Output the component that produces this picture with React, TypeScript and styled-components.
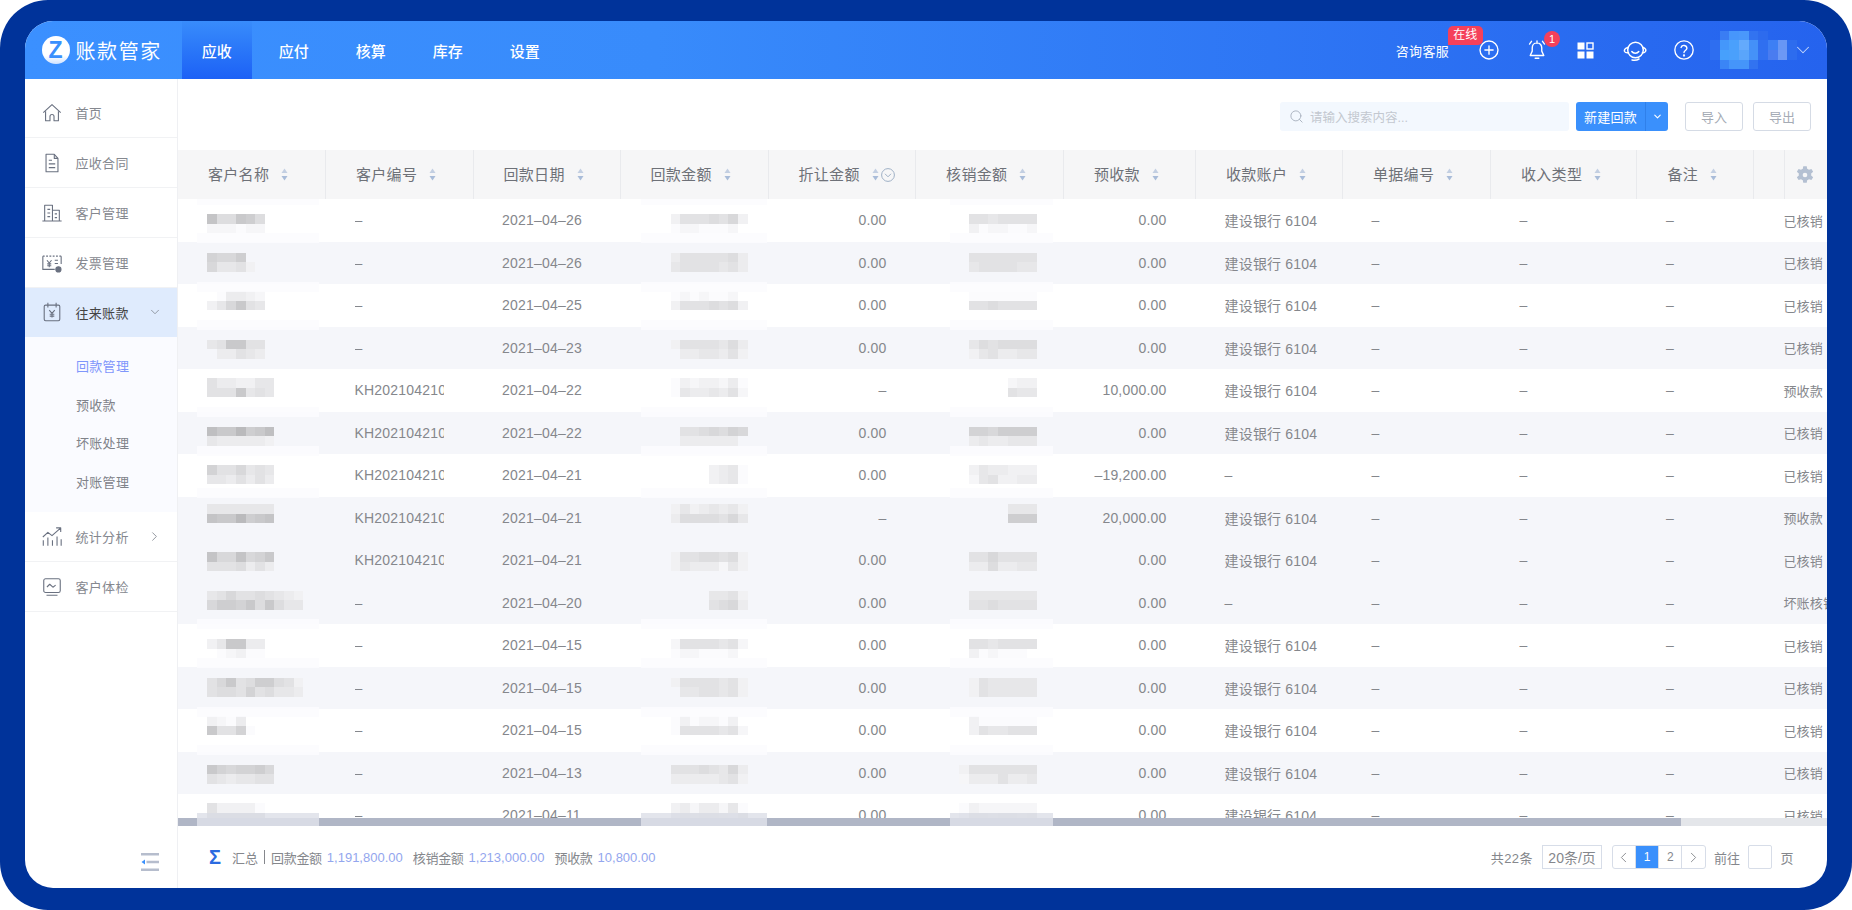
import styled, { createGlobalStyle } from "styled-components"
import { ChevronDown, ChevronLeft, ChevronRight, Search } from "lucide-react"

const GlobalStyle = createGlobalStyle`
  html, body {
    margin: 0;
    padding: 0;
    background: #fff;
  }
  body {
    font-family: "Liberation Sans", "Noto Sans CJK SC", sans-serif;
  }
  * {
    box-sizing: border-box;
  }
`

const TABS = ["应收", "应付", "核算", "库存", "设置"]

const COLUMNS = [
  { title: "客户名称" },
  { title: "客户编号" },
  { title: "回款日期" },
  { title: "回款金额" },
  { title: "折让金额", extra: true },
  { title: "核销金额" },
  { title: "预收款" },
  { title: "收款账户" },
  { title: "单据编号" },
  { title: "收入类型" },
  { title: "备注" },
]

const ROWS = [
  { top: 15, code: "–", date: "2021–04–26", off: "0.00", pre: "0.00", acc: true, status: "已核销", name: ["499569", "eeefee"], amt: ["daaa9a8d", "feefffe."], done: [".aabaaaa", ".dfeeffe"] },
  { top: 11, gray: true, code: "–", date: "2021–04–26", off: "0.00", pre: "0.00", acc: true, status: "已核销", name: ["7886", "8bbad"], amt: ["caaaaa9c", "baaaabac"], done: [".aaaaaaa", ".baaaabb"] },
  { top: 7, code: "–", date: "2021–04–25", off: "0.00", pre: "0.00", acc: true, status: "已核销", name: [".fccde", "db85ab"], amt: ["fefeffe.", "daaa9a9d"], done: [".fffffff", ".aa9aaaa"] },
  { top: 13, gray: true, code: "–", date: "2021–04–23", off: "0.00", pre: "0.00", acc: true, status: "已核销", name: ["ba55aa", ".ccabc"], amt: ["daaaab9c", ".ccbbcad"], done: [".b9a9999", ".dbaccbb"] },
  { top: 9, code: "KH2021042100", date: "2021–04–22", off: "–", pre: "10,000.00", acc: true, status: "预收款", name: ["accddbb", "aaa5bab"], amt: ["fdeddecf", "fbccbcae"], done: [".....edd", ".....abb"] },
  { top: 15, gray: true, code: "KH2021042100", date: "2021–04–22", off: "0.00", pre: "0.00", acc: true, status: "已核销", name: ["3552653", "bcccccd"], amt: [".aa98978", ".cccccc."], done: [".7786666", ".cbccbbb"] },
  { top: 11, code: "KH2021042100", date: "2021–04–21", off: "0.00", pre: "–19,200.00", acc: false, status: "已核销", name: ["7aa8bab", "bbcacac"], amt: ["....dcbf", "....dcbf"], done: [".dbccddd", ".ebaddcc"] },
  { top: 7.5, gray: true, code: "KH2021042100", date: "2021–04–21", off: "–", pre: "20,000.00", acc: true, status: "预收款", name: ["bbbbbbb", "4552654"], amt: ["dbdcbcbd", "c9999a8b"], done: [".....bbb", ".....666"] },
  { top: 13, gray: true, code: "KH2021042100", date: "2021–04–21", off: "0.00", pre: "0.00", acc: true, status: "已核销", name: ["4884875", "aaa9cac"], amt: ["daa99a9d", "dbcccebd"], done: [".aa8aaaa", ".cc9ccbb"] },
  { top: 9, gray: true, code: "–", date: "2021–04–20", off: "0.00", pre: "0.00", acc: false, status: "坏账核销", name: ["ba8aa9abcd", "86675959bb"], amt: ["....bbad", "....a98c"], done: [".bbbbbbb", ".aa9aaaa"] },
  { top: 15, code: "–", date: "2021–04–15", off: "0.00", pre: "0.00", acc: true, status: "已核销", name: ["db55cc", ".fedff"], amt: ["eaaaabae", "feefffe."], done: [".aabaaaa", ".dfefff"] },
  { top: 11, gray: true, code: "–", date: "2021–04–15", off: "0.00", pre: "0.00", acc: true, status: "已核销", name: ["a85a9669ad", "a99a7a9bbc"], amt: ["daaaabad", ".bbaabad"], done: [".dabbbbb", ".dabbbbb"] },
  { top: 7, code: "–", date: "2021–04–15", off: "0.00", pre: "0.00", acc: true, status: "已核销", name: ["defc", "5aa7f"], amt: ["fdfeefd.", "faaaabae"], done: [".dffffff", ".dabbaaa"] },
  { top: 13, gray: true, code: "–", date: "2021–04–13", off: "0.00", pre: "0.00", acc: true, status: "已核销", name: ["5787768", "abcbbaa"], amt: ["aaa9ab8c", "cccccbad"], done: ["daaaaaaa", "ecccaccb"] },
  { top: 9, code: "–", date: "2021–04–11", off: "0.00", pre: "0.00", acc: true, status: "已核销", name: ["addddf", "555555"], amt: ["dceccebf", "86766785"], done: ["fdeeeeee", "c6676676"] },
]

const SMUDGE_TOPS = [-4, 34, 83, 121, 208, 247, 289, 420, 459, 508, 546]

const AVATAR = [
  ["", "#3a7df3", "#4796fb", "#4a98fb", "#3273f0", "#2d6bee", "", "", ""],
  ["#2e6ef0", "#4497fb", "#4aa0fc", "#64aafc", "#4490f8", "#2f6ff0", "#3d7ff4", "#6796f5", "#2d6cee"],
  ["#2e6ef0", "#47a0fc", "#4aa0fc", "#5aa5fb", "#4592f8", "#3270f0", "#4a7cf0", "#6c98f5", "#2d6cee"],
  ["", "#3a85f6", "#4595fa", "#4595fa", "#3273f0", "", "", "", ""],
]

const shade = (ch: string) => {
  const h = parseInt(ch, 16)
  if (Number.isNaN(h)) return "transparent"
  const g = 0xb0 + h * 5
  return `rgb(${g},${g},${Math.min(g + 2, 255)})`
}

const SortIcon = () => (
  <svg width="7" height="13" viewBox="0 0 7 13">
    <path d="M3.5 0.5 6.5 5H0.5z" fill="#c3cfe2" />
    <path d="M3.5 12.5 0.5 8h6z" fill="#a9bcd9" />
  </svg>
)

const Mosaic = ({ rows, top, left }: { rows: string[]; top: number; left: number }) => (
  <MosaicBox $top={top} $left={left}>
    {rows.map((line, i) => (
      <TileRow key={i}>
        {line.split("").map((ch, j) => (
          <Tile key={j} $color={shade(ch)} />
        ))}
      </TileRow>
    ))}
  </MosaicBox>
)

const IconHome = () => (
  <NavSvg viewBox="0 0 24 24">
    <path d="M2.5 11.5 12 2.8l9.5 8.7" />
    <path d="M5 10v10.5h4.8v-4.6a2.2 2.2 0 0 1 4.4 0v4.6H19V10" />
  </NavSvg>
)

const IconDoc = () => (
  <NavSvg viewBox="0 0 24 24">
    <path d="M5.5 2.5h9l4 4.5v14.5h-13z" />
    <path d="M14.5 2.5V7h4M8.5 9h3.5M8.5 13h7M8.5 17h7" />
  </NavSvg>
)

const IconBuilding = () => (
  <NavSvg viewBox="0 0 24 24">
    <path d="M4 20.5V3.5h8.5v17M12.5 9H20v11.5M1.5 20.8h21" />
    <path d="M7 8h3M7 12h3M7 16h3M15 13h2.5M15 17h2.5" />
  </NavSvg>
)

const IconInvoice = () => (
  <NavSvg viewBox="0 0 24 24">
    <path d="M2 4.5v14.5h13M22 13V4.5" />
    <path d="M2 4.5h20" strokeDasharray="2 1.6" />
    <path d="M6.5 9 9 12l2.5-3M9 12v4.5M6.8 13h4.4M6.8 15h4.4M15 9h3.5M15 12.5h3.5" />
    <circle cx="19" cy="19" r="2.8" fill="#6a7180" />
  </NavSvg>
)

const IconCalendar = () => (
  <NavSvg viewBox="0 0 24 24">
    <rect x="3.5" y="4.5" width="17" height="17" rx="1.5" />
    <path d="M7.5 2v5M16.5 2v5" />
    <path d="M9 10l3 3.5 3-3.5M12 13.5V18M9.5 14.5h5M9.5 16.5h5" />
  </NavSvg>
)

const IconChart = () => (
  <NavSvg viewBox="0 0 24 24">
    <path d="M2.5 21.5v-6M7.5 21.5v-9M12.5 21.5v-6M17.5 21.5v-10M22 21.5v-7" />
    <path d="M2 12 7.5 7l4.5 3.5 9-8M16.5 2H21.5v4.5" />
  </NavSvg>
)

const IconMonitor = () => (
  <NavSvg viewBox="0 0 24 24">
    <rect x="3" y="3" width="18" height="15" rx="2" />
    <path d="M6.5 12l3-3 3.5 3.2L16 10M6 21h12" />
  </NavSvg>
)

const IconPlus = () => (
  <TopSvg viewBox="0 0 24 24">
    <circle cx="12" cy="12" r="9.8" />
    <path d="M12 7.5v9M7.5 12h9" />
  </TopSvg>
)

const IconBell = () => (
  <TopSvg viewBox="0 0 24 24">
    <path d="M12 4.2c-3.6 0-5.2 2.9-5.2 5.6v3.4L4.6 18h14.8l-2.2-4.8V9.8c0-2.7-1.6-5.6-5.2-5.6z" />
    <path d="M10 21h4M12 2v2M6 2.5 3.8 5.5M18 2.5l2.2 3" />
  </TopSvg>
)

const IconApps = () => (
  <svg width="17" height="17" viewBox="0 0 17 17">
    <rect x="0.5" y="0.5" width="7" height="7" fill="#fff" />
    <rect x="10" y="1" width="6" height="6" fill="none" stroke="#fff" strokeWidth="1.4" />
    <rect x="0.5" y="9.5" width="7" height="7" fill="#fff" />
    <rect x="9.5" y="9.5" width="7" height="7" fill="#fff" />
  </svg>
)

const IconService = () => (
  <TopSvg viewBox="0 0 24 24" $size={24}>
    <circle cx="12.5" cy="12" r="7.8" />
    <path d="M5 9.5C2 10 1 12 1.6 13.5c.6 1.2 2.4 1.4 3.9 1.2M20 9.5c2.4.6 3.4 2.4 2.4 4-.6 1.1-1.8 1.4-3 1.2" />
    <path d="M8.8 13.5c1.6 2.4 5.4 2.4 7 0M9 22c2.4.6 5 .3 7-1" />
  </TopSvg>
)

const IconHelp = () => (
  <TopSvg viewBox="0 0 24 24">
    <circle cx="12" cy="12" r="10" />
    <path d="M8.8 9.2a3.3 3.3 0 0 1 6.4 1c0 2.2-3.2 2.6-3.2 4.6" />
    <circle cx="12" cy="18" r="0.5" />
  </TopSvg>
)

const IconCollapse = () => (
  <svg width="19" height="18" viewBox="0 0 19 18">
    <path d="M0 1.3h18M5.5 9H18M0 16.7h18" stroke="#b6bdcd" strokeWidth="2.4" fill="none" />
    <path d="M0.5 9 4 6.6v4.8z" fill="#3a90fc" />
  </svg>
)

const IconRound = () => (
  <svg width="14" height="14" viewBox="0 0 14 14">
    <circle cx="7" cy="7" r="6.4" fill="none" stroke="#9fb0c6" strokeWidth="1" />
    <path d="M4 5.8 7 8.8l3-3" fill="none" stroke="#9fb0c6" strokeWidth="1" />
  </svg>
)

export default function App() {
  return (
    <>
      <GlobalStyle />
      <Device>
        <Screen>
          <TopBar>
            <Brand>
              <LogoMark>Z</LogoMark>
              <BrandName>账款管家</BrandName>
            </Brand>
            <Tabs>
              {TABS.map((tab, i) => (
                <Tab key={tab} $active={i === 0}>
                  {tab}
                </Tab>
              ))}
            </Tabs>
            <TopRight>
              <Consult>
                咨询客服
                <OnlineBadge>在线</OnlineBadge>
              </Consult>
              <IconSlot $width={24}>
                <IconPlus />
              </IconSlot>
              <IconSlot $width={24} $gap={24}>
                <IconBell />
                <CountBadge>1</CountBadge>
              </IconSlot>
              <IconSlot $width={24} $gap={24}>
                <IconApps />
              </IconSlot>
              <IconSlot $width={24} $gap={26}>
                <IconService />
              </IconSlot>
              <IconSlot $width={24} $gap={25}>
                <IconHelp />
              </IconSlot>
              <AvatarGrid>
                {AVATAR.map((line, i) => (
                  <AvatarRow key={i}>
                    {line.map((c, j) => (
                      <AvatarTile key={j} $color={c || "transparent"} />
                    ))}
                  </AvatarRow>
                ))}
              </AvatarGrid>
              <ChevronDown size={22} color="#c6d8fb" strokeWidth={1.1} />
            </TopRight>
          </TopBar>
          <Body>
            <Sidebar>
              <NavItem>
                <IconHome />
                首页
              </NavItem>
              <NavItem>
                <IconDoc />
                应收合同
              </NavItem>
              <NavItem>
                <IconBuilding />
                客户管理
              </NavItem>
              <NavItem>
                <IconInvoice />
                发票管理
              </NavItem>
              <NavItem $active>
                <IconCalendar />
                往来账款
                <NavArrow>
                  <ChevronDown size={14} strokeWidth={1.3} />
                </NavArrow>
              </NavItem>
              <SubMenu>
                <SubItem $active>回款管理</SubItem>
                <SubItem>预收款</SubItem>
                <SubItem>坏账处理</SubItem>
                <SubItem>对账管理</SubItem>
              </SubMenu>
              <NavItem>
                <IconChart />
                统计分析
                <NavArrow>
                  <ChevronRight size={15} strokeWidth={1.3} />
                </NavArrow>
              </NavItem>
              <NavItem>
                <IconMonitor />
                客户体检
              </NavItem>
              <CollapseRow>
                <IconCollapse />
              </CollapseRow>
            </Sidebar>
            <Main>
              <Toolbar>
                <SearchBox>
                  <Search size={15} color="#aab2bf" strokeWidth={1.5} />
                  请输入搜索内容...
                </SearchBox>
                <SplitButton>
                  <SplitLabel>新建回款</SplitLabel>
                  <SplitArrow>
                    <ChevronDown size={11} strokeWidth={2.4} />
                  </SplitArrow>
                </SplitButton>
                <GhostButton>导入</GhostButton>
                <GhostButton>导出</GhostButton>
              </Toolbar>
              <TableArea>
                <HeaderRow>
                  {COLUMNS.map((col) => (
                    <HeaderCell key={col.title}>
                      <HeaderTitle>{col.title}</HeaderTitle>
                      <SortSlot $tight={col.extra}>
                        <SortIcon />
                      </SortSlot>
                      {col.extra && <IconRound />}
                    </HeaderCell>
                  ))}
                  <HeaderCell />
                  <GearCell>
                    <svg width="20" height="20" viewBox="0 0 24 24" fill="#b4c0d2">
                      <path d="M14.1 1.5l.5 3a8 8 0 0 1 2.2 1.3l2.9-1 2.1 3.3-2.4 2a8 8 0 0 1 0 2.6l2.4 2-2.1 3.3-2.9-1a8 8 0 0 1-2.2 1.3l-.5 3H9.9l-.5-3a8 8 0 0 1-2.2-1.3l-2.9 1-2.1-3.3 2.4-2a8 8 0 0 1 0-2.6l-2.4-2 2.1-3.3 2.9 1a8 8 0 0 1 2.2-1.3l.5-3zM12 9.2a2.8 2.8 0 1 0 0 5.6 2.8 2.8 0 0 0 0-5.6z" fillRule="evenodd" />
                    </svg>
                  </GearCell>
                </HeaderRow>
                <TableBody>
                  {ROWS.map((row, i) => (
                    <Row key={i} $gray={row.gray}>
                      <Cell>
                        <Mosaic rows={row.name} top={row.top} left={29} />
                      </Cell>
                      <Cell>
                        <CodeText>{row.code}</CodeText>
                      </Cell>
                      <Cell>{row.date}</Cell>
                      <Cell>
                        <Mosaic rows={row.amt} top={row.top} left={50} />
                      </Cell>
                      <Cell $right>{row.off}</Cell>
                      <Cell>
                        <Mosaic rows={row.done} top={row.top} left={43.4} />
                      </Cell>
                      <Cell $right>{row.pre}</Cell>
                      <Cell>{row.acc ? "建设银行 6104" : "–"}</Cell>
                      <Cell>–</Cell>
                      <Cell>–</Cell>
                      <Cell>–</Cell>
                      <StatusCell>{row.status}</StatusCell>
                    </Row>
                  ))}
                  {SMUDGE_TOPS.map((top) => (
                    <div key={top}>
                      <Smudge $top={top} $left={18.7} $width={122} />
                      <Smudge $top={top} $left={463} $width={126} />
                      <Smudge $top={top} $left={772} $width={103} />
                    </div>
                  ))}
                </TableBody>
                <ScrollTrack>
                  <ScrollThumb />
                </ScrollTrack>
                <RedactPatch $left={18.7} $width={122} $height={15} />
                <RedactPatch $left={463} $width={126} $height={19} />
                <RedactPatch $left={772} $width={103} $height={19} />
              </TableArea>
              <Footer>
                <Summary>
                  <SigmaMark>Σ</SigmaMark>
                  <SummaryHead>汇总</SummaryHead>
                  <SummaryBar />
                  <SummaryLabel>回款金额</SummaryLabel>
                  <SummaryValue>1,191,800.00</SummaryValue>
                  <SummaryLabel>核销金额</SummaryLabel>
                  <SummaryValue>1,213,000.00</SummaryValue>
                  <SummaryLabel>预收款</SummaryLabel>
                  <SummaryValue>10,800.00</SummaryValue>
                </Summary>
                <Pager>
                  <PagerCount>共22条</PagerCount>
                  <PageSize>20条/页</PageSize>
                  <PageGroup>
                    <PageCell>
                      <ChevronLeft size={17} strokeWidth={1.3} />
                    </PageCell>
                    <PageCell $active>1</PageCell>
                    <PageCell>2</PageCell>
                    <PageCell>
                      <ChevronRight size={17} strokeWidth={1.3} />
                    </PageCell>
                  </PageGroup>
                  <PagerText>前往</PagerText>
                  <GotoInput />
                  <PagerText>页</PagerText>
                </Pager>
              </Footer>
            </Main>
          </Body>
        </Screen>
      </Device>
    </>
  )
}

const Device = styled.div`
  width: 1852px;
  height: 910px;
  padding: 21px 25px 22px 24.5px;
  background: #00339a;
  border-radius: 48px;
  overflow: hidden;
`

const Screen = styled.div`
  width: 100%;
  height: 100%;
  display: flex;
  flex-direction: column;
  background: #fff;
  border-radius: 28px;
  overflow: hidden;
`

const TopBar = styled.header`
  height: 58px;
  flex: none;
  display: flex;
  align-items: stretch;
  color: #fff;
  background: linear-gradient(90deg, #3b90ff 0%, #388bfb 35%, #2563ee 100%);
`

const Brand = styled.div`
  width: 157.5px;
  display: flex;
  align-items: center;
  padding-left: 17px;
  gap: 6px;
`

const LogoMark = styled.div`
  width: 28px;
  height: 28px;
  border-radius: 50%;
  display: flex;
  align-items: center;
  justify-content: center;
  background: linear-gradient(180deg, #fff 70%, #cfe2ff 100%);
  color: #3a8ffd;
  font-size: 23px;
  font-weight: 700;
  line-height: 1;
`

const BrandName = styled.div`
  font-size: 20px;
  letter-spacing: 1.6px;
  white-space: nowrap;
`

const Tabs = styled.nav`
  display: flex;
  gap: 7.5px;
`

const Tab = styled.div<{ $active?: boolean }>`
  width: 69.5px;
  display: flex;
  align-items: center;
  justify-content: center;
  font-size: 15px;
  font-weight: 500;
  background: ${({ $active }) =>
    $active ? "linear-gradient(180deg, #388cfb 0%, #1c61f6 100%)" : "transparent"};
`

const TopRight = styled.div`
  margin-left: auto;
  display: flex;
  align-items: center;
  padding-right: 13px;
`

const Consult = styled.div`
  position: relative;
  font-size: 13px;
  letter-spacing: 0.3px;
  margin-right: 28px;
  white-space: nowrap;
`

const OnlineBadge = styled.span`
  position: absolute;
  left: 52px;
  top: -15px;
  width: 35px;
  height: 19px;
  border-radius: 5px 5px 5px 0;
  background: #f5405a;
  font-size: 12px;
  line-height: 19px;
  text-align: center;
  letter-spacing: 0;
`

const IconSlot = styled.div<{ $width: number; $gap?: number }>`
  position: relative;
  width: ${({ $width }) => $width}px;
  display: flex;
  align-items: center;
  justify-content: center;
  margin-left: ${({ $gap }) => $gap ?? 0}px;
`

const TopSvg = styled.svg<{ $size?: number }>`
  width: ${({ $size }) => $size ?? 22}px;
  height: ${({ $size }) => $size ?? 22}px;
  fill: none;
  stroke: #fff;
  stroke-width: 1.5;
  stroke-linecap: round;
  stroke-linejoin: round;
`

const CountBadge = styled.span`
  position: absolute;
  left: 19px;
  top: -8px;
  width: 16px;
  height: 16px;
  border-radius: 50%;
  background: #f5405a;
  font-size: 11px;
  line-height: 16px;
  text-align: center;
`

const AvatarGrid = styled.div`
  margin-left: 14px;
  margin-right: -5px;
  width: 87px;
  display: flex;
  flex-direction: column;
`

const AvatarRow = styled.div`
  display: flex;
`

const AvatarTile = styled.div<{ $color: string }>`
  width: 9.7px;
  height: 9.7px;
  background: ${({ $color }) => $color};
`

const Body = styled.div`
  flex: 1;
  min-height: 0;
  display: flex;
`

const Sidebar = styled.aside`
  width: 153.5px;
  flex: none;
  padding-top: 9px;
  display: flex;
  flex-direction: column;
  border-right: 1px solid #eff0f3;
`

const NavItem = styled.div<{ $active?: boolean }>`
  height: ${({ $active }) => ($active ? 49 : 50)}px;
  flex: none;
  display: flex;
  align-items: center;
  gap: 13px;
  padding: 0 15px 0 16px;
  font-size: 13px;
  letter-spacing: 0.3px;
  color: ${({ $active }) => ($active ? "#444" : "#85888f")};
  background: ${({ $active }) => ($active ? "#dfebfd" : "transparent")};
  border-bottom: 1px solid ${({ $active }) => ($active ? "transparent" : "#f1f2f4")};
`

const NavSvg = styled.svg`
  width: 22px;
  height: 22px;
  flex: none;
  fill: none;
  stroke: #6a7180;
  stroke-width: 1.2;
  stroke-linejoin: round;
`

const NavArrow = styled.span`
  margin-left: auto;
  display: flex;
  color: #7b808a;
`

const SubMenu = styled.div`
  height: 175px;
  flex: none;
  padding-top: 11px;
  background: #fafbff;
`

const SubItem = styled.div<{ $active?: boolean }>`
  height: 38.6px;
  line-height: 38.6px;
  padding-left: 51.5px;
  font-size: 13px;
  letter-spacing: 0.3px;
  color: ${({ $active }) => ($active ? "#7f96fb" : "#7f8289")};
`

const CollapseRow = styled.div`
  margin-top: auto;
  padding: 0 17px 17px 0;
  display: flex;
  justify-content: flex-end;
`

const Main = styled.main`
  flex: 1;
  min-width: 0;
  display: flex;
  flex-direction: column;
`

const Toolbar = styled.div`
  height: 71px;
  flex: none;
  display: flex;
  align-items: flex-start;
  justify-content: flex-end;
  padding: 23px 16px 0 0;
`

const SearchBox = styled.div`
  width: 289px;
  height: 29px;
  margin-right: 7px;
  display: flex;
  align-items: center;
  gap: 6px;
  padding-left: 9px;
  border-radius: 3px;
  background: #f3f8fe;
  font-size: 12.5px;
  color: #c3c8d0;
`

const SplitButton = styled.div`
  width: 92px;
  height: 29px;
  display: flex;
  margin-right: 7px;
  border-radius: 3px;
  background: #3a90fc;
  color: #fff;
  font-size: 13px;
`

const SplitLabel = styled.div`
  width: 70px;
  display: flex;
  align-items: center;
  justify-content: center;
  border-right: 1px solid #2f80ea;
  letter-spacing: 0.3px;
`

const SplitArrow = styled.div`
  flex: 1;
  display: flex;
  align-items: center;
  justify-content: center;
`

const GhostButton = styled.div`
  width: 58px;
  height: 29px;
  margin-left: 10px;
  display: flex;
  align-items: center;
  justify-content: center;
  border: 1px solid #d5dbe5;
  border-radius: 3px;
  font-size: 13px;
  color: #a5abb5;
`

const GRID = "148px 147.5px 147px 148px 147.6px 147.9px 132px 147px 148px 146.4px 117px 28.5px 44.5px"

const TableArea = styled.div`
  position: relative;
  flex: 1;
  min-height: 0;
  display: flex;
  flex-direction: column;
  overflow: hidden;
`

const HeaderRow = styled.div`
  height: 49px;
  flex: none;
  display: grid;
  grid-template-columns: ${GRID};
  background: #f6f6f7;
`

const HeaderCell = styled.div`
  display: flex;
  align-items: center;
  padding-left: 30px;
  border-right: 1px solid #e9eaed;
  font-size: 15px;
  letter-spacing: 0.3px;
  color: #6e7178;
  white-space: nowrap;
`

const HeaderTitle = styled.span`
  line-height: 1;
`

const SortSlot = styled.span<{ $tight?: boolean }>`
  display: flex;
  margin-left: 12px;
  margin-right: ${({ $tight }) => ($tight ? 2.5 : 0)}px;
`

const GearCell = styled.div`
  display: flex;
  align-items: center;
  justify-content: center;
`

const TableBody = styled.div`
  position: relative;
  flex: 1;
  min-height: 0;
  overflow: hidden;
`

const Row = styled.div<{ $gray?: boolean }>`
  height: 42.5px;
  display: grid;
  grid-template-columns: ${GRID};
  background: ${({ $gray }) => ($gray ? "#f5f6fa" : "#fff")};
`

const Cell = styled.div<{ $right?: boolean }>`
  position: relative;
  display: flex;
  align-items: center;
  justify-content: ${({ $right }) => ($right ? "flex-end" : "flex-start")};
  padding: 0 29.5px 0 28.5px;
  font-size: 14px;
  letter-spacing: 0.2px;
  color: #85878c;
  white-space: nowrap;
  overflow: hidden;
`

const StatusCell = styled(Cell)`
  grid-column: span 2;
  padding: 0 0 0 29px;
  font-size: 13px;
  letter-spacing: 0.2px;
`

const CodeText = styled.span`
  width: 90px;
  overflow: hidden;
`

const MosaicBox = styled.div<{ $top: number; $left: number }>`
  position: absolute;
  top: ${({ $top }) => $top}px;
  left: ${({ $left }) => $left}px;
`

const TileRow = styled.div`
  display: flex;
`

const Tile = styled.div<{ $color: string }>`
  width: 9.65px;
  height: 9.7px;
  background: ${({ $color }) => $color};
`

const Smudge = styled.div<{ $top: number; $left: number; $width: number }>`
  position: absolute;
  top: ${({ $top }) => $top}px;
  left: ${({ $left }) => $left}px;
  width: ${({ $width }) => $width}px;
  height: 9.7px;
  background: rgba(251, 252, 254, 0.85);
`

const ScrollTrack = styled.div`
  height: 8px;
  flex: none;
  background: #e4e6ea;
`

const ScrollThumb = styled.div`
  width: 1502.5px;
  height: 100%;
  background: #b0b6c6;
`

const RedactPatch = styled.div<{ $left: number; $width: number; $height: number }>`
  position: absolute;
  top: 663px;
  left: ${({ $left }) => $left}px;
  width: ${({ $width }) => $width}px;
  height: ${({ $height }) => $height}px;
  background: rgba(222, 225, 233, 0.85);
`

const Footer = styled.footer`
  height: 62px;
  flex: none;
  display: flex;
  align-items: center;
  justify-content: space-between;
  padding: 0 33.4px 0 31px;
`

const Summary = styled.div`
  display: flex;
  align-items: center;
  font-size: 13px;
`

const SigmaMark = styled.span`
  width: 23px;
  color: #2b6be0;
  font-size: 20px;
  font-weight: 700;
  line-height: 1;
`

const SummaryHead = styled.span`
  color: #85878c;
`

const SummaryBar = styled.span`
  width: 1px;
  height: 14px;
  margin: 0 6px;
  background: #85878c;
`

const SummaryLabel = styled.span`
  color: #85878c;
  letter-spacing: -0.3px;
`

const SummaryValue = styled.span`
  margin: 0 10px 0 5px;
  color: #93a6ee;
`

const Pager = styled.div`
  display: flex;
  align-items: center;
  font-size: 13px;
`

const PagerText = styled.span`
  color: #85878c;
  white-space: nowrap;
`

const PagerCount = styled(PagerText)`
  letter-spacing: 0.5px;
`

const PageSize = styled.div`
  width: 60px;
  height: 24px;
  margin: 0 9.6px 0 9px;
  display: flex;
  align-items: center;
  justify-content: center;
  border: 1px solid #d7dde8;
  color: #85878c;
  font-size: 14px;
  white-space: nowrap;
`

const PageGroup = styled.div`
  display: flex;
  width: 94px;
  height: 24px;
  margin-right: 8.4px;
  border: 1px solid #d7dde8;
  border-radius: 3px;
`

const PageCell = styled.div<{ $active?: boolean }>`
  flex: 1;
  display: flex;
  align-items: center;
  justify-content: center;
  font-size: 12px;
  color: ${({ $active }) => ($active ? "#fff" : "#85878c")};
  background: ${({ $active }) => ($active ? "#3a90fc" : "transparent")};
  border-right: 1px solid #d7dde8;

  &:last-child {
    border-right: none;
  }
`

const GotoInput = styled.div`
  width: 24px;
  height: 24px;
  margin: 0 8.5px 0 8px;
  border: 1px solid #d7dde8;
  border-radius: 2px;
`
